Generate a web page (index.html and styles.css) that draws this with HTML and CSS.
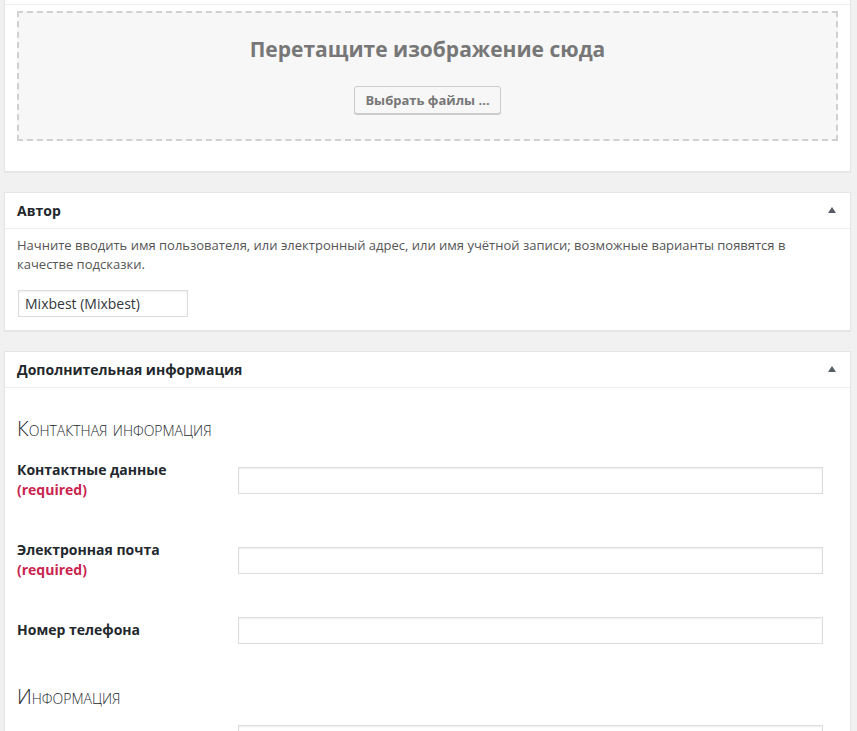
FILE: index.html
```html
<!DOCTYPE html>
<html lang="ru">
<head>
    <meta charset="UTF-8">
    <meta name="viewport" content="width=device-width, initial-scale=1.0">
    <title>Профиль</title>
    <link rel="stylesheet" href="styles.css">
</head>
<body>
    <div class="wrap">

        <div class="postbox upload_box">
            <div class="upload_top"></div>
            <div class="upload_inside">
                <div class="dropzone">
                    <p class="drop_title">Перетащите изображение сюда</p>
                    <button class="button">Выбрать файлы ...</button>
                </div>
            </div>
        </div>

        <div class="postbox">
            <div class="hndle">
                <h2>Автор</h2>
                <span class="toggle"></span>
            </div>
            <div class="inside author_inside">
                <p class="description">Начните вводить имя пользователя, или электронный адрес, или имя учётной записи; возможные варианты появятся в качестве подсказки.</p>
                <input type="text" class="author_input" value="Mixbest (Mixbest)">
            </div>
        </div>

        <div class="postbox">
            <div class="hndle">
                <h2>Дополнительная информация</h2>
                <span class="toggle"></span>
            </div>
            <div class="inside fields_inside">
                <h3 class="section_title">Контактная информация</h3>

                <div class="field_row two_lines">
                    <label for="contact">Контактные данные <span class="required">(required)</span></label>
                    <input type="text" id="contact" class="field_input">
                </div>

                <div class="field_row two_lines">
                    <label for="email">Электронная почта <span class="required">(required)</span></label>
                    <input type="text" id="email" class="field_input">
                </div>

                <div class="field_row">
                    <label for="phone">Номер телефона</label>
                    <input type="text" id="phone" class="field_input">
                </div>

                <h3 class="section_title second">Информация</h3>

                <div class="field_row">
                    <label for="info"></label>
                    <input type="text" id="info" class="field_input">
                </div>
            </div>
        </div>

    </div>
</body>
</html>
```

FILE: styles.css
```css
body {
    margin: 0;
    background: #f1f1f1;
    font-family: "Open Sans", "Liberation Sans", sans-serif;
    font-size: 13px;
    color: #444;
}

.wrap {
    padding: 0 6px 0 4px;
}

.postbox {
    background: #fff;
    border: 1px solid #e5e5e5;
    box-shadow: 0 1px 1px rgba(0, 0, 0, .04);
    margin-bottom: 20px;
}

.upload_box {
    border-top: 0;
    margin-bottom: 20px;
}

.upload_top {
    height: 4px;
    border-bottom: 1px solid #eee;
}

.upload_inside {
    padding: 6px 12px 30px;
}

.dropzone {
    border: 2px dashed #d0d0d0;
    background: #f7f7f7;
    height: 126px;
    box-sizing: content-box;
    text-align: center;
    padding: 0;
}

.drop_title {
    margin: 0;
    padding-top: 22px;
    font-size: 21px;
    line-height: 29px;
    font-weight: 700;
    color: #777;
}

.button {
    margin-top: 22px;
    height: 28px;
    padding: 0 10px 1px;
    font-family: inherit;
    font-size: 13px;
    font-weight: 700;
    color: #777;
    background: #f7f7f7;
    border: 1px solid #ccc;
    border-radius: 3px;
    box-shadow: 0 1px 0 #ccc;
}

.hndle {
    display: flex;
    justify-content: space-between;
    align-items: center;
    height: 35px;
    padding: 0 14px 0 12px;
    border-bottom: 1px solid #eee;
}

.hndle h2 {
    margin: 0;
    font-size: 14px;
    font-weight: 700;
    color: #23282d;
}

.toggle {
    width: 0;
    height: 0;
    border-left: 4px solid transparent;
    border-right: 4px solid transparent;
    border-bottom: 6px solid #555d66;
    margin-bottom: 2px;
}

.inside {
    padding: 0 12px 12px;
}

.author_inside {
    padding-top: 7px;
    padding-bottom: 13px;
}

.description {
    margin: 0 0 16px;
    line-height: 19px;
    color: #555;
}

.author_input {
    display: block;
    margin: 0 0 0 1px;
    width: 170px;
    height: 27px;
    box-sizing: border-box;
    padding: 0 6px;
    border: 1px solid #ddd;
    box-shadow: inset 0 1px 2px rgba(0, 0, 0, .07);
    font-family: inherit;
    font-size: 14px;
    color: #32373c;
}

.fields_inside {
    padding-top: 28px;
}

.section_title {
    margin: 0;
    font-size: 20.5px;
    line-height: 24px;
    font-weight: 300;
    font-variant: small-caps;
    color: #23282d;
}

.section_title.second {
    margin-top: 24px;
}

.field_row {
    display: grid;
    grid-template-columns: 221px 585px;
    align-items: center;
    height: 60px;
}

.field_row.two_lines {
    height: 80px;
}

.field_row label {
    font-size: 14px;
    line-height: 20px;
    font-weight: 700;
    color: #23282d;
}

.required {
    display: block;
    color: #c9254f;
}

.field_input {
    height: 27px;
    box-sizing: border-box;
    margin: 0;
    border: 1px solid #ddd;
    box-shadow: inset 0 1px 2px rgba(0, 0, 0, .07);
    font-family: inherit;
    font-size: 14px;
}
```
